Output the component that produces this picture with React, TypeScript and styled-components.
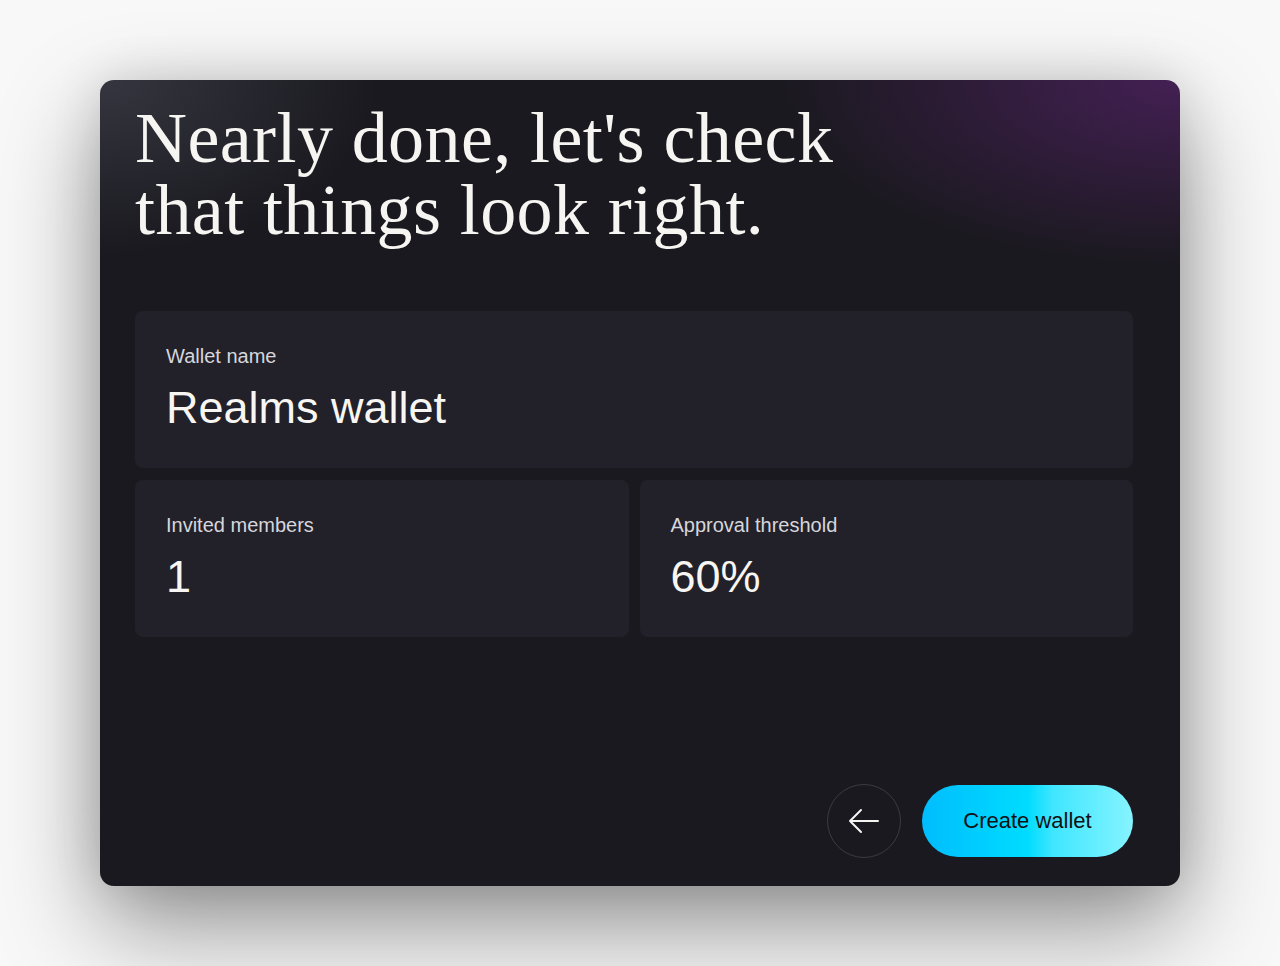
import styled, { createGlobalStyle } from "styled-components";

const Global = createGlobalStyle`
  html, body {
    margin: 0;
    padding: 0;
    background: #f8f8f8;
  }
  * {
    box-sizing: border-box;
  }
`;

const App = () => {
  return (
    <>
      <Global />
      <Page>
        <Card>
          <Heading>
            <Line>Nearly done, let's check</Line>
            <Line>that things look right.</Line>
          </Heading>
          <Summary>
            <Panel wide>
              <Label>Wallet name</Label>
              <Value>Realms wallet</Value>
            </Panel>
            <Panel>
              <Label>Invited members</Label>
              <Value>1</Value>
            </Panel>
            <Panel>
              <Label>Approval threshold</Label>
              <Value>60%</Value>
            </Panel>
          </Summary>
          <Footer>
            <BackButton aria-label="Back">
              <svg width="32" height="32" viewBox="0 0 32 32" fill="none">
                <path
                  d="M30 16H2M2 16L13 5M2 16L13 27"
                  stroke="#f4f4f2"
                  strokeWidth="2"
                  strokeLinecap="round"
                  strokeLinejoin="round"
                />
              </svg>
            </BackButton>
            <CreateButton>Create wallet</CreateButton>
          </Footer>
        </Card>
      </Page>
    </>
  );
};

const Page = styled.div`
  height: 100vh;
  display: flex;
  align-items: center;
  justify-content: center;
`;

const Card = styled.div`
  width: 1080px;
  height: 806px;
  border-radius: 14px;
  padding: 22px 47px 28px 35px;
  display: flex;
  flex-direction: column;
  background:
    radial-gradient(ellipse 400px 250px at 0% 0%, rgba(80, 82, 96, 0.5), transparent 70%),
    radial-gradient(ellipse 540px 250px at 100% 0%, rgba(84, 34, 104, 0.72), transparent 75%),
    #1a191f;
  box-shadow: 0 40px 100px rgba(0, 0, 0, 0.42), 0 0 50px rgba(0, 0, 0, 0.12);
`;

const Heading = styled.h1`
  margin: 0;
  font-family: "Liberation Serif", "DejaVu Serif", serif;
  font-weight: 400;
  font-size: 72px;
  letter-spacing: 0.4px;
  color: #f6f5f2;
`;

const Line = styled.span`
  display: block;
  height: 72px;
  line-height: 72px;
`;

const Summary = styled.div`
  margin-top: 65px;
  display: grid;
  grid-template-columns: 1fr 1fr;
  gap: 12px 11px;
`;

const Panel = styled.div<{ wide?: boolean }>`
  grid-column: ${(p) => (p.wide ? "1 / -1" : "auto")};
  height: 157px;
  padding: 33px 31px 0;
  border-radius: 8px;
  background: #222129;
  font-family: "Liberation Sans", Arial, sans-serif;
`;

const Label = styled.div`
  font-size: 20px;
  line-height: 24px;
  color: #d6d6dc;
`;

const Value = styled.div`
  margin-top: 14px;
  font-size: 45px;
  line-height: 52px;
  color: #f7f6f3;
`;

const Footer = styled.div`
  margin-top: auto;
  display: flex;
  justify-content: flex-end;
  align-items: center;
  gap: 21px;
`;

const BackButton = styled.button`
  width: 74px;
  height: 74px;
  border-radius: 50%;
  border: 1px solid #3b3b43;
  background: transparent;
  display: flex;
  align-items: center;
  justify-content: center;
  padding: 0;
  cursor: pointer;
`;

const CreateButton = styled.button`
  width: 211px;
  height: 72px;
  border: none;
  border-radius: 36px;
  background: linear-gradient(90deg, #00bdfd 0%, #00dcff 50%, #3fe6ff 62%, #86f4ff 100%);
  font-family: "Liberation Sans", Arial, sans-serif;
  font-size: 22px;
  color: #111114;
  cursor: pointer;
`;

export default App;
